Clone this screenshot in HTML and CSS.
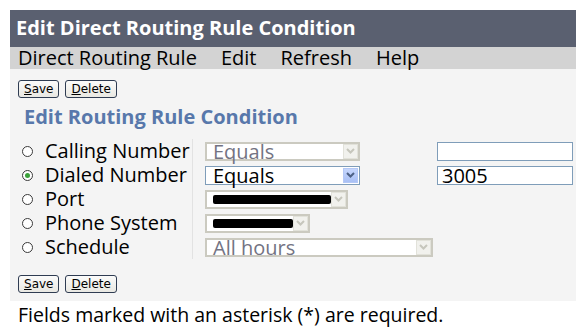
FILE: index.html
```html
<!DOCTYPE html>
<html lang="en">
<head>
    <meta charset="UTF-8">
    <title>Edit Direct Routing Rule Condition</title>
    <link rel="stylesheet" href="styles.css">
</head>
<body>
    <div class="page">
        <div class="titlebar">Edit Direct Routing Rule Condition</div>
        <div class="menubar">
            <span>Direct Routing Rule</span>
            <span>Edit</span>
            <span>Refresh</span>
            <span>Help</span>
        </div>
        <div class="content">
            <div class="actions">
                <button class="btn"><u>S</u>ave</button>
                <button class="btn"><u>D</u>elete</button>
            </div>
            <h2 class="heading">Edit Routing Rule Condition</h2>

            <div class="conditions">
                <label class="cond"><span class="radio"></span>Calling Number</label>
                <div class="cell"><div class="select disabled" style="width:155px"><span class="value">Equals</span><span class="arrow"></span></div></div>
                <div class="cell"><div class="textbox"></div></div>

                <label class="cond"><span class="radio checked"></span>Dialed Number</label>
                <div class="cell"><div class="select active" style="width:155px"><span class="value">Equals</span><span class="arrow"></span></div></div>
                <div class="cell"><div class="textbox">3005</div></div>

                <label class="cond"><span class="radio"></span>Port</label>
                <div class="cell"><div class="select" style="width:143px"><span class="value"><span class="redact" style="width:118px"></span></span><span class="arrow"></span></div></div>
                <div class="cell"></div>

                <label class="cond"><span class="radio"></span>Phone System</label>
                <div class="cell"><div class="select" style="width:105px"><span class="value"><span class="redact" style="width:80px"></span></span><span class="arrow"></span></div></div>
                <div class="cell"></div>

                <label class="cond"><span class="radio"></span>Schedule</label>
                <div class="cell"><div class="select disabled" style="width:228px"><span class="value">All hours</span><span class="arrow"></span></div></div>
                <div class="cell"></div>
            </div>

            <div class="actions bottom">
                <button class="btn"><u>S</u>ave</button>
                <button class="btn"><u>D</u>elete</button>
            </div>
        </div>
        <div class="note">Fields marked with an asterisk (*) are required.</div>
    </div>
</body>
</html>
```

FILE: styles.css
```css
body {
    margin: 0;
    background: #fff;
    font-family: "Open Sans", "Noto Sans", sans-serif;
    color: #000;
}
.page {
    width: 566px;
    margin: 10px 0 0 10px;
}
.titlebar {
    height: 37px;
    line-height: 36px;
    padding-left: 6px;
    background: #5a6070;
    color: #fff;
    font-weight: bold;
    font-size: 20px;
}
.menubar {
    height: 22px;
    line-height: 21px;
    padding-left: 8px;
    background: #d3d3d3;
    font-size: 20px;
    display: flex;
    gap: 24px;
}
.content {
    background: #f4f4f4;
    padding: 11px 0 8px;
}
.actions {
    display: flex;
    gap: 6px;
    padding-left: 8px;
}
.actions.bottom {
    margin-top: 16px;
}
.btn {
    font-family: "DejaVu Sans", Verdana, sans-serif;
    font-size: 12px;
    height: 18px;
    padding: 0 5px;
    background: linear-gradient(#fbfbfa, #e9e8e2);
    border: 1px solid #2f3c52;
    border-radius: 3px;
    color: #000;
}
.heading {
    margin: 7px 0 10px 14px;
    font-size: 20px;
    font-weight: bold;
    color: #5878ab;
    line-height: 24px;
}
.conditions {
    display: grid;
    grid-template-columns: 183px 244px 136px;
    grid-auto-rows: 24px;
}
.cond {
    display: flex;
    align-items: center;
    padding-left: 12px;
    font-size: 20px;
    line-height: 24px;
    border-right: 1px solid #e2e2e2;
}
.radio {
    width: 9px;
    height: 9px;
    border: 1px solid #3a3a3a;
    border-radius: 50%;
    background: #fff;
    margin-right: 12px;
    position: relative;
}
.radio.checked::after {
    content: "";
    position: absolute;
    left: 2px;
    top: 2px;
    width: 5px;
    height: 5px;
    border-radius: 50%;
    background: #3ba23b;
}
.cell {
    display: flex;
    align-items: center;
}
.select {
    margin-left: 12px;
    height: 19px;
    box-sizing: border-box;
    border: 2px solid #cbcac0;
    background: #fff;
    display: flex;
    align-items: center;
    font-size: 20px;
}
.select .value {
    flex: 1;
    padding-left: 6px;
    line-height: 15px;
    display: flex;
    align-items: center;
}
.select.disabled .value {
    color: #737383;
}
.select.active {
    border: 1px solid #7f9db9;
    padding: 1px;
}
.arrow {
    width: 15px;
    height: 15px;
    box-sizing: border-box;
    border: 1px solid #e2e2da;
    background: #f1f1ed url("data:image/svg+xml;utf8,<svg xmlns='http://www.w3.org/2000/svg' width='9' height='6'><path d='M1 1l3.5 3.5L8 1' fill='none' stroke='%23c6c6bc' stroke-width='2'/></svg>") center no-repeat;
}
.select.active .arrow {
    border-color: #b4c8f6;
    background: linear-gradient(#c6d6fc, #a9c0f5);
    position: relative;
}
.select.active .arrow::after {
    content: "";
    position: absolute;
    inset: 0;
    background: url("data:image/svg+xml;utf8,<svg xmlns='http://www.w3.org/2000/svg' width='9' height='6'><path d='M1 1l3.5 3.5L8 1' fill='none' stroke='%234d6185' stroke-width='2'/></svg>") center no-repeat;
}
.redact {
    display: inline-block;
    height: 9px;
    background: #000;
    border-radius: 2px;
}
.textbox {
    width: 136px;
    height: 19px;
    box-sizing: border-box;
    border: 1px solid #7f9db9;
    background: #fff;
    font-size: 20px;
    line-height: 17px;
    padding-left: 4px;
}
.note {
    padding: 1px 0 0 8px;
    font-size: 19.5px;
    line-height: 26px;
    background: #fff;
}
```
